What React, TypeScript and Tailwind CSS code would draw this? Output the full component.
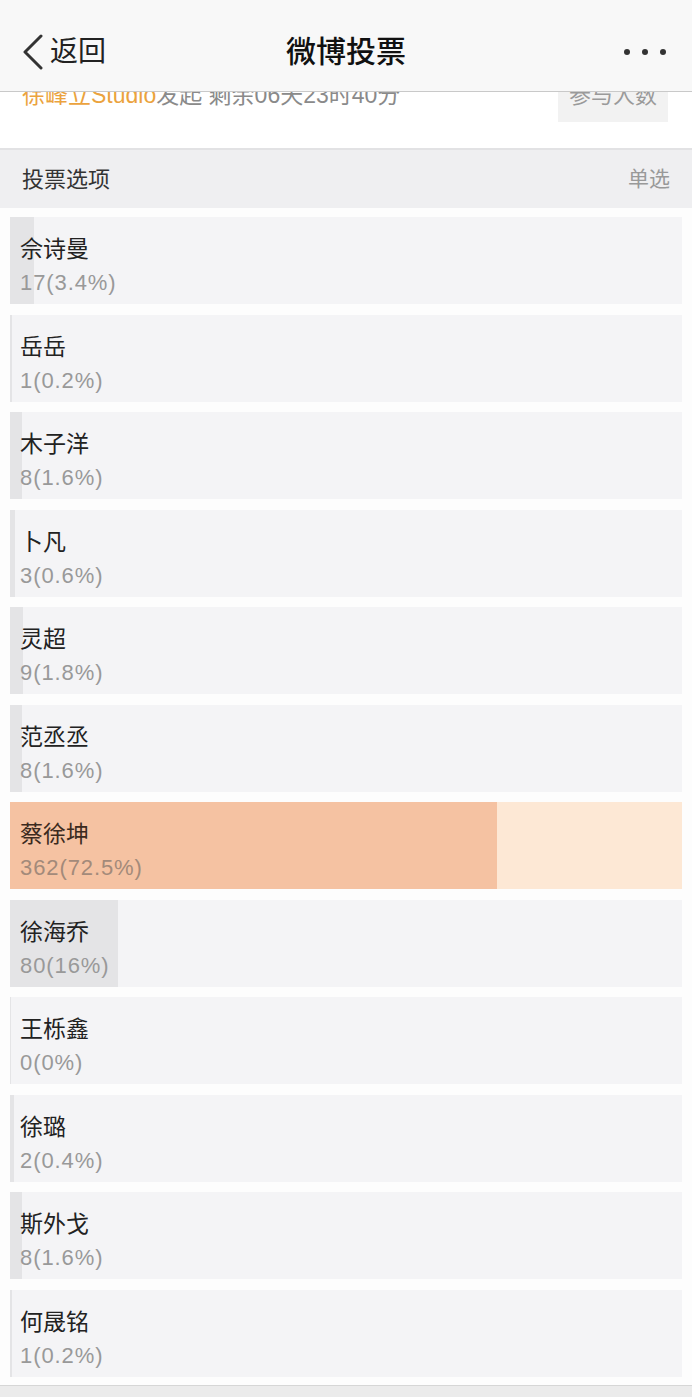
import React from "react";

const font = { fontFamily: '"Liberation Sans", "Noto Sans CJK SC", sans-serif' };

type Option = { name: string; votes: number; pct: string; value: number; top?: boolean };

const options: Option[] = [
  { name: "佘诗曼", votes: 17, pct: "3.4%", value: 3.4 },
  { name: "岳岳", votes: 1, pct: "0.2%", value: 0.2 },
  { name: "木子洋", votes: 8, pct: "1.6%", value: 1.6 },
  { name: "卜凡", votes: 3, pct: "0.6%", value: 0.6 },
  { name: "灵超", votes: 9, pct: "1.8%", value: 1.8 },
  { name: "范丞丞", votes: 8, pct: "1.6%", value: 1.6 },
  { name: "蔡徐坤", votes: 362, pct: "72.5%", value: 72.5, top: true },
  { name: "徐海乔", votes: 80, pct: "16%", value: 16 },
  { name: "王栎鑫", votes: 0, pct: "0%", value: 0 },
  { name: "徐璐", votes: 2, pct: "0.4%", value: 0.4 },
  { name: "斯外戈", votes: 8, pct: "1.6%", value: 1.6 },
  { name: "何晟铭", votes: 1, pct: "0.2%", value: 0.2 },
];

const OptionRow: React.FC<{ item: Option }> = ({ item }) => (
  <div
    className={
      "relative h-[87px] overflow-hidden " +
      (item.top ? "bg-[#fde8d5]" : "bg-[#f4f4f6] border-l border-[#e4e4e6]")
    }
  >
    <div
      className={"absolute inset-y-0 left-0 " + (item.top ? "bg-[#f5c2a2]" : "bg-[#e4e4e6]")}
      style={{ width: `${item.value}%` }}
    />
    <div className={"relative flex flex-col pt-[17px] " + (item.top ? "pl-[10px]" : "pl-[9px]")}>
      <span className={"text-[23px] leading-[30px] " + (item.top ? "text-[#3b2a20]" : "text-[#222]")}>
        {item.name}
      </span>
      <span
        className={
          "mt-[4px] text-[22px] leading-[30px] tracking-[0.9px] " +
          (item.top ? "text-[#a38a7a]" : "text-[#999]")
        }
      >
        {item.votes}({item.pct})
      </span>
    </div>
  </div>
);

export default function App() {
  return (
    <div className="w-[692px] h-[1397px] bg-white flex flex-col overflow-hidden" style={font}>
      {/* nav bar */}
      <div className="h-[92px] shrink-0 bg-[#f8f8f8] border-b border-[#c9c9c9] flex items-center px-[22px] pt-[12px] relative z-10">
        <div className="flex items-center w-[160px]">
          <svg width="22" height="36" viewBox="0 0 22 36" className="text-[#333]">
            <path d="M19 2 L3 18 L19 34" fill="none" stroke="currentColor" strokeWidth="3" strokeLinecap="round" strokeLinejoin="round" />
          </svg>
          <span className="ml-[6px] text-[28px] leading-none text-[#222]">返回</span>
        </div>
        <div className="flex-1 text-center text-[30px] font-medium text-[#111] leading-none">微博投票</div>
        <div className="w-[160px] flex justify-end items-center gap-[12px] pr-[4px]">
          <span className="w-[6px] h-[6px] rounded-full bg-[#333]" />
          <span className="w-[6px] h-[6px] rounded-full bg-[#333]" />
          <span className="w-[6px] h-[6px] rounded-full bg-[#333]" />
        </div>
      </div>

      {/* scrolled info strip, partly under nav */}
      <div className="h-[56px] shrink-0 overflow-hidden bg-white">
        <div className="-mt-[24px] flex justify-between pl-[22px] pr-[24px]">
          <div className="mt-[15px] text-[23px] leading-[24px] whitespace-nowrap">
            <span className="text-[#eba33e]">徐峰立Studio</span>
            <span className="text-[#8a8a8a]">发起 剩余06天23时40分</span>
          </div>
          <div className="w-[110px] h-[54px] bg-[#f2f2f2] flex items-center justify-center text-[22px] text-[#9a9a9a]">
            参与人数
          </div>
        </div>
      </div>

      {/* section header */}
      <div className="h-[60px] shrink-0 bg-[#efeff1] border-t-2 border-[#e2e2e4] flex items-center justify-between px-[22px]">
        <span className="text-[22px] text-[#333]">投票选项</span>
        <span className="text-[21px] text-[#999]">单选</span>
      </div>

      {/* options */}
      <div className="flex flex-col gap-[10.5px] px-[10px] pt-[9px] pb-[8px] bg-[#fdfdfd]">
        {options.map((o) => (
          <OptionRow key={o.name} item={o} />
        ))}
      </div>

      <div className="flex-1 bg-[#ebebeb] border-t border-[#d6d6d6]" />
    </div>
  );
}
